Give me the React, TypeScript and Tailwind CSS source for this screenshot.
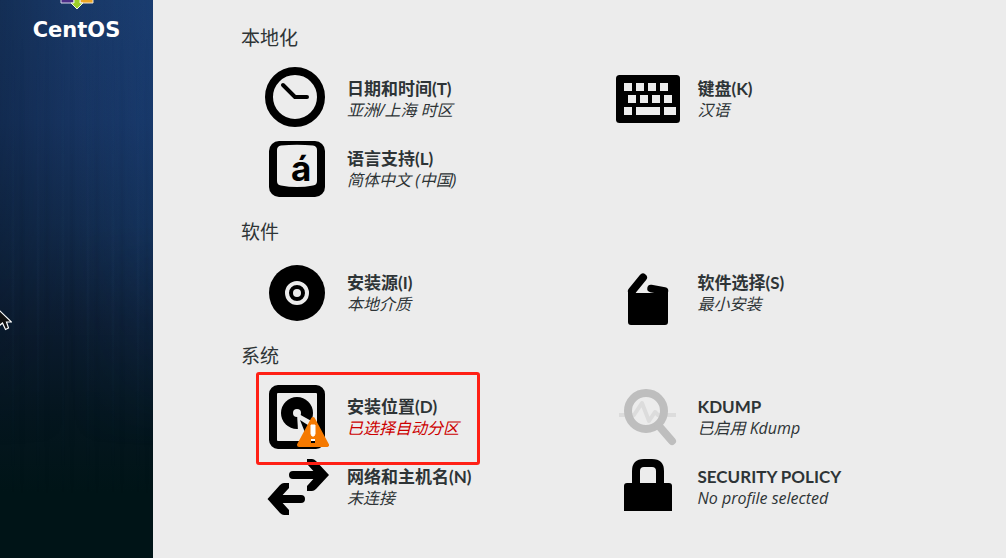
import React, { useState } from 'react';

type IconProps = { className?: string };

interface Spoke {
  id: string;
  title: string;
  status: string;
  icon: React.ComponentType<IconProps>;
  warning?: boolean;
}

interface Category {
  name: string;
  spokes: Spoke[];
}

function ClockIcon({ className }: IconProps) {
  return (
    <svg className={className} viewBox="0 0 64 64" aria-hidden="true">
      <circle cx="30" cy="30" r="26" fill="none" stroke="#000" strokeWidth="8" />
      <path d="M18 18L30 30H42" fill="none" stroke="#000" strokeWidth="4" strokeLinecap="round" strokeLinejoin="round" />
    </svg>
  );
}

function KeyboardIcon({ className }: IconProps) {
  return (
    <svg className={className} viewBox="0 0 64 64" aria-hidden="true">
      <rect x="0" y="8" width="64" height="48" rx="3.5" />
      <path
        d="M8 16h8v8h-8zM20 16h8v8h-8zM32 16h8v8h-8zM44 16h8v8h-8zM12 28h8v8h-8zM24 28h8v8h-8zM36 28h8v8h-8zM48 28h8v8h-8zM8 40h8v8h-8zM20 40h24v8h-24zM48 40h12v8h-12z"
        fill="#ececec"
      />
    </svg>
  );
}

function LanguageIcon({ className }: IconProps) {
  return (
    <svg className={className} viewBox="0 0 64 64" aria-hidden="true">
      <rect x="4" y="4" width="56" height="56" rx="10" />
      <path d="M16 8.500Q32 7 48 8.500Q52 9 52 13V44Q52 48 48 48.500Q32 51.500 16 48.500Q12 48 12 44V13Q12 9 16 8.500Z" fill="#ececec" />
      <text x="26" y="44" fontFamily="Inter" fontWeight="700" fontSize="35">á</text>
    </svg>
  );
}

function DiscIcon({ className }: IconProps) {
  return (
    <svg className={className} viewBox="0 0 64 64" aria-hidden="true">
      <circle cx="32" cy="32" r="28" />
      <circle cx="32" cy="32" r="10" fill="none" stroke="#ececec" strokeWidth="4" />
      <circle cx="32" cy="32" r="4" fill="#ececec" />
    </svg>
  );
}

function PackageIcon({ className }: IconProps) {
  return (
    <svg className={className} viewBox="0 0 64 64" aria-hidden="true">
      <path d="M16 30L27 16.500" stroke="#000" strokeWidth="8" strokeLinecap="round" />
      <path d="M35 27.500L48.500 30" stroke="#000" strokeWidth="7.500" strokeLinecap="round" />
      <path d="M12 29H17L20 32H42L48 27Q52 27.500 52 30V61Q52 64 49 64H15Q12 64 12 61Z" />
    </svg>
  );
}

function DiskIcon({ className }: IconProps) {
  return (
    <svg className={className} viewBox="0 0 64 64" aria-hidden="true">
      <rect x="8" y="4" width="48" height="56" rx="5" fill="#ececec" stroke="#000" strokeWidth="8" />
      <circle cx="32" cy="28" r="16" />
      <path d="M32 28L50 38L42 56L33 46Z" fill="#ececec" />
      <path d="M35 35L46 42L41 50Z" />
      <circle cx="32" cy="28" r="4" fill="#ececec" />
      <path d="M48 34L62 60H34Z" fill="#f57900" stroke="#f57900" strokeWidth="4" strokeLinejoin="round" />
      <path d="M46 40h4v9l-1 2h-2l-1 -2z" fill="#fff" stroke="#fff" strokeWidth="1" strokeLinejoin="round" />
      <rect x="46" y="54" width="4" height="2" fill="#fff" />
      <rect x="46" y="56" width="4" height="2" />
    </svg>
  );
}

function KdumpIcon({ className }: IconProps) {
  return (
    <svg className={className} viewBox="0 0 64 64" aria-hidden="true">
      <path d="M3 30H18L26 18L33 36L39 27L42 30H60" fill="none" stroke="#dcdcdc" strokeWidth="4" strokeLinejoin="round" />
      <circle cx="30" cy="26" r="18" fill="none" stroke="#bebebe" strokeWidth="8" />
      <path d="M43 41L56 56" stroke="#bebebe" strokeWidth="8" strokeLinecap="round" />
    </svg>
  );
}

function NetworkIcon({ className }: IconProps) {
  return (
    <svg className={className} viewBox="0 0 64 64" aria-hidden="true">
      <path d="M28 20H54M12 44H36" stroke="#000" strokeWidth="8" strokeLinecap="round" />
      <path d="M42 4H47Q49 4 51 6L64 20L51 34Q49 36 47 36H42V31L52 20L42 9Z" />
      <path d="M24 28H19Q17 28 15 30L2.500 44L15 58Q17 60 19 60H24V55L14 44L24 33Z" />
    </svg>
  );
}

function LockIcon({ className }: IconProps) {
  return (
    <svg className={className} viewBox="0 0 64 64" aria-hidden="true">
      <path d="M20 32V16Q20 8 28 8H36Q44 8 44 16V32" fill="none" stroke="#000" strokeWidth="8" />
      <path d="M11 28H53Q56 28 56 31V56H8V31Q8 28 11 28Z" />
    </svg>
  );
}

const categories: Category[] = [
  {
    name: '本地化',
    spokes: [
      { id: 'datetime', title: '日期和时间(T)', status: '亚洲/上海 时区', icon: ClockIcon },
      { id: 'keyboard', title: '键盘(K)', status: '汉语', icon: KeyboardIcon },
      { id: 'language', title: '语言支持(L)', status: '简体中文 (中国)', icon: LanguageIcon },
    ],
  },
  {
    name: '软件',
    spokes: [
      { id: 'source', title: '安装源(I)', status: '本地介质', icon: DiscIcon },
      { id: 'software', title: '软件选择(S)', status: '最小安装', icon: PackageIcon },
    ],
  },
  {
    name: '系统',
    spokes: [
      { id: 'storage', title: '安装位置(D)', status: '已选择自动分区', icon: DiskIcon, warning: true },
      { id: 'kdump', title: 'KDUMP', status: '已启用 Kdump', icon: KdumpIcon },
      { id: 'network', title: '网络和主机名(N)', status: '未连接', icon: NetworkIcon },
      { id: 'security', title: 'SECURITY POLICY', status: 'No profile selected', icon: LockIcon },
    ],
  },
];

function SpokeButton({ spoke, highlighted, onSelect }: { spoke: Spoke; highlighted: boolean; onSelect: (id: string) => void }) {
  const Icon = spoke.icon;

  return (
    <div className="relative">
      <button
        type="button"
        onClick={() => onSelect(spoke.id)}
        className="flex w-full items-center gap-[18px] text-left"
      >
        <Icon className="size-16 shrink-0" />
        <span className="flex flex-col whitespace-nowrap">
          <span className="text-[17px] leading-[22px] font-bold">{spoke.title}</span>
          <span className={`font-['Open_Sans','Noto_Sans_CJK_SC',sans-serif] text-[16px] leading-[20px] italic ${spoke.warning ? 'text-[#cc0000]' : ''}`}>
            {spoke.status}
          </span>
        </span>
      </button>
      {highlighted && (
        <span className="pointer-events-none absolute -top-[13px] -left-[9px] z-10 h-[93px] w-[224px] rounded-[3px] border-3 border-[#ff2015]" />
      )}
    </div>
  );
}

function Sidebar() {
  return (
    <aside className="relative w-[153px] shrink-0 overflow-hidden bg-[linear-gradient(to_bottom,#193866_0%,#17335f_22%,#122a4b_40%,#0c1c30_58%,#05161f_74%,#001417_88%,#001417_100%)]">
      {/* light from the right and faint vertical streaks */}
      <div className="absolute inset-0 bg-[linear-gradient(to_right,rgba(0,10,20,0.2),transparent_45%,rgba(30,80,150,0.22))] mask-[linear-gradient(to_bottom,black_40%,transparent_80%)]" />
      <div className="absolute inset-0 bg-[repeating-linear-gradient(to_right,transparent_0px,transparent_11px,rgba(90,140,190,0.05)_13px,transparent_15px,transparent_19px,rgba(0,0,0,0.05)_22px,transparent_25px)] mask-[linear-gradient(to_bottom,transparent_5%,black_50%,transparent_90%)]" />
      <div className="relative flex flex-col items-center">
        <svg className="h-[10px] w-[34px]" viewBox="0 0 34 10" aria-hidden="true">
          <path d="M1 -4H14V3H1Z" fill="#4b2d87" stroke="#d8d8ea" />
          <path d="M20 -4H33V3H20Z" fill="#efa724" stroke="#f0e6d8" />
          <path d="M14 -4V3H11L17 9L23 3H20V-4Z" fill="#9ccd2a" stroke="#f0f5e6" />
        </svg>
        <span className="font-['DejaVu_Sans'] text-[21px] leading-[40px] font-bold text-white">CentOS</span>
      </div>
    </aside>
  );
}

export function App() {
  const [highlighted, setHighlighted] = useState('storage');

  return (
    <div className="relative flex min-h-screen bg-[#ececec] font-[Lato,'Noto_Sans_CJK_SC',sans-serif] text-[#2e3436]">
      <Sidebar />

      <main className="flex flex-1 flex-col gap-4 pt-[23px] pr-10 pb-10 pl-[88px]">
        {categories.map((category) => (
          <section key={category.name}>
            <h2 className="text-[19px] leading-[30px]">{category.name}</h2>
            <div className="mt-[14px] grid grid-cols-2 gap-y-[6px] pl-6">
              {category.spokes.map((spoke) => (
                <SpokeButton
                  key={spoke.id}
                  spoke={spoke}
                  highlighted={highlighted === spoke.id}
                  onSelect={setHighlighted}
                />
              ))}
            </div>
          </section>
        ))}
      </main>

      {/* Mouse pointer */}
      <svg className="pointer-events-none absolute top-[309px] left-0 h-[22px] w-3" viewBox="0 0 12 22" aria-hidden="true">
        <path d="M-1 1V17L2.500 14L5.500 20.500L8.500 19L6.500 13H11.500Z" fill="#111" stroke="#fff" strokeWidth="1.200" />
      </svg>
    </div>
  );
}

export default App;
